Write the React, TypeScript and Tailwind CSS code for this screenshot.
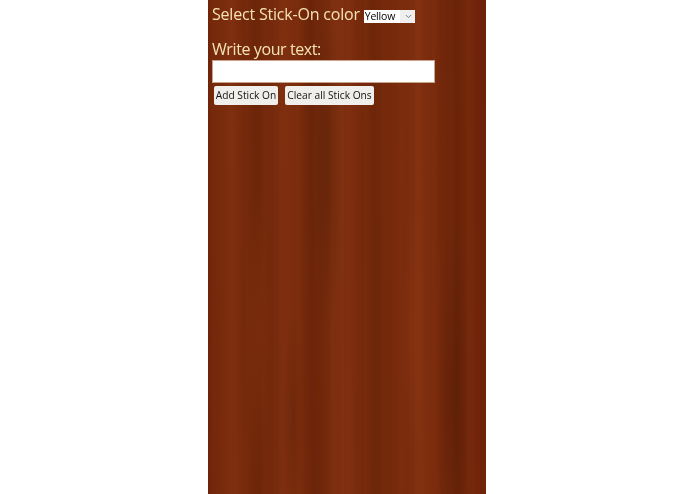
import React from 'react';
import { ChevronDown } from 'lucide-react';

const App: React.FC = () => {
  return (
    <div className="w-[695px] h-[494px] bg-white flex justify-center overflow-hidden">
      <div className="ml-[-1px] w-[278px] h-[494px] pl-[4px] pt-[3px] bg-[#772a0c] bg-[radial-gradient(ellipse_12px_150px_at_50px_330px,rgba(150,60,20,0.3),transparent),radial-gradient(ellipse_14px_170px_at_120px_160px,rgba(50,15,0,0.22),transparent),radial-gradient(ellipse_12px_130px_at_205px_330px,rgba(150,60,20,0.28),transparent),radial-gradient(ellipse_16px_180px_at_245px_400px,rgba(50,15,0,0.2),transparent),radial-gradient(ellipse_10px_120px_at_85px_420px,rgba(50,15,0,0.18),transparent),repeating-linear-gradient(90deg,rgba(60,15,0,0.06)_0px,transparent_3px,rgba(170,80,30,0.04)_5px,transparent_8px,rgba(60,15,0,0.04)_13px,transparent_17px),linear-gradient(89.6deg,#6f2309_0%,#7a2b0c_5%,#7e2f0f_10%,#75290b_14%,#6e2609_18%,#782b0d_24%,#802f0f_29%,#7a2c0c_33%,#6a2408_38%,#7a2d0d_44%,#823112_48%,#7b2c0d_53%,#6f2709_60%,#782a0c_66%,#7c2d0e_72%,#833110_76%,#76290b_83%,#6a2408_89%,#76280b_94%,#6c1f08_100%)] font-['Open_Sans',sans-serif]">
        <div className="flex items-center h-[22px] gap-[4px] blur-[0.3px]">
          <span className="text-[16px] tracking-[-0.2px] leading-[22px] text-[#f6e3b4] whitespace-nowrap">Select Stick-On color</span>
          <div className="relative w-[51px] h-[13px] mt-[4px] bg-[#efefef] flex items-center">
            <select defaultValue="Yellow" className="w-[36px] h-[13px] pl-[1px] bg-white text-[10.5px] font-medium leading-[13px] tracking-[-0.2px] text-black appearance-none">
              <option>Yellow</option>
            </select>
            <ChevronDown className="absolute right-[2px] top-[2px] w-[9px] h-[9px] text-[#555]" />
          </div>
        </div>
        <div className="mt-[13px] text-[16px] tracking-[-0.4px] leading-[22px] text-[#f6e3b4] blur-[0.3px]">Write your text:</div>
        <input type="text" className="block w-[223px] h-[23px] bg-white border border-[#c9a48c]" />
        <div className="flex gap-[7px] mt-[3px] ml-[2px] blur-[0.3px]">
          <button className="w-[64px] h-[19px] bg-[#f1efec] rounded-[2px] text-[10.2px] leading-[19px] text-[#111] whitespace-nowrap">Add Stick On</button>
          <button className="w-[89px] h-[19px] bg-[#f1efec] rounded-[2px] text-[10.2px] leading-[19px] text-[#111] whitespace-nowrap">Clear all Stick Ons</button>
        </div>
      </div>
    </div>
  );
};

export default App;
